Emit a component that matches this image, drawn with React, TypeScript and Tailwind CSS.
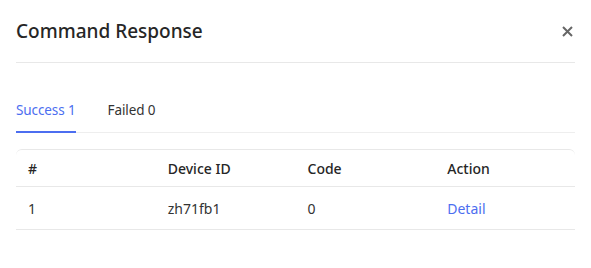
import React from "react";

export default function App() {
  return (
    <div
      className="w-[591px] h-[268px] bg-white text-[#333] overflow-hidden"
      style={{ fontFamily: '"Noto Sans", "Open Sans", sans-serif' }}
    >
      <div className="px-4">
        <div className="flex items-center justify-between h-[63px] border-b border-[#e8e8e8]">
          <h2 className="text-[19px] font-medium text-[#262626] leading-none">Command Response</h2>
          <button className="w-[14px] h-[14px] mr-[1px] flex items-center justify-center">
            <svg width="11" height="11" viewBox="0 0 11 11">
              <path d="M1 1 L10 10 M10 1 L1 10" stroke="#666" strokeWidth="2" strokeLinecap="butt" />
            </svg>
          </button>
        </div>
        <div className="mt-[29px] flex gap-8 border-b border-[#eeeeee] h-[41px] items-stretch">
          <div className="relative flex items-center text-[13.5px] tracking-[-0.1px] text-[#4c6ef0] pb-[3px]">
            Success 1
            <span className="absolute left-0 right-0 bottom-[-1px] h-[2px] bg-[#4c6ef0]" />
          </div>
          <div className="flex items-center text-[13.5px] tracking-[-0.1px] text-[#333] pb-[3px]">Failed 0</div>
        </div>
        <div className="mt-[16px] border-t border-[#e8e8e8] rounded-t-[6px]">
          <div className="grid grid-cols-4 h-[37px] items-center border-b border-[#e8e8e8] text-[14px] font-medium text-[#262626]">
            <div className="pl-3">#</div>
            <div className="pl-3">Device ID</div>
            <div className="pl-3">Code</div>
            <div className="pl-3">Action</div>
          </div>
          <div className="grid grid-cols-4 h-[43px] items-center border-b border-[#e8e8e8] text-[14px] text-[#333]">
            <div className="pl-3">1</div>
            <div className="pl-3">zh71fb1</div>
            <div className="pl-3">0</div>
            <div className="pl-3 text-[#4c6ef0]">Detail</div>
          </div>
        </div>
      </div>
    </div>
  );
}
